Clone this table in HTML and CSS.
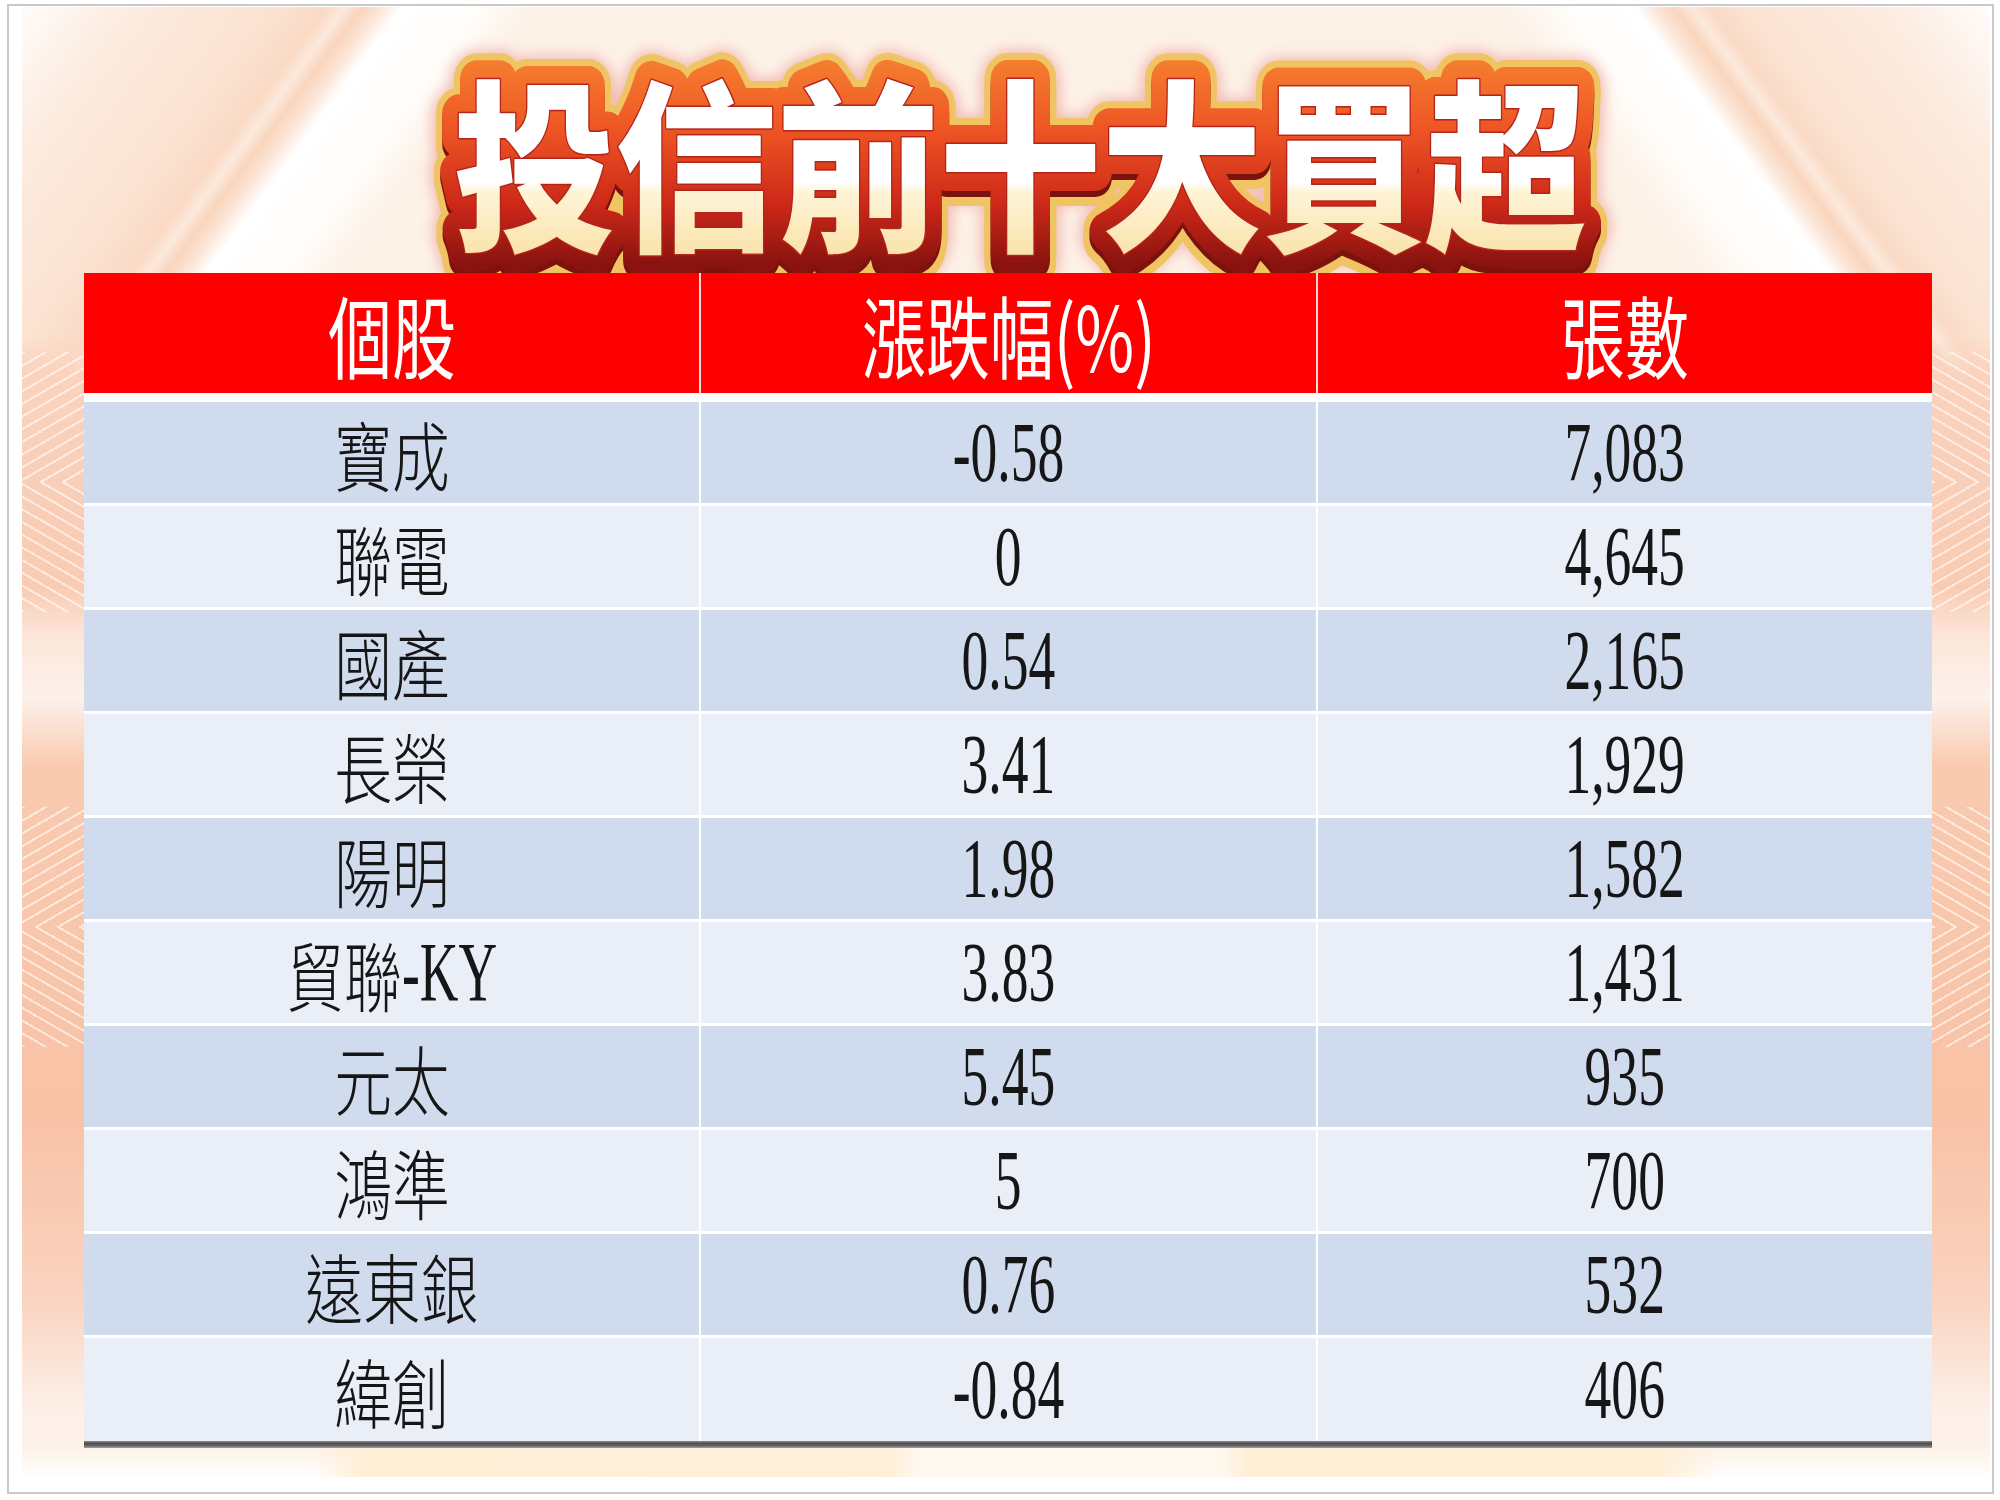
FILE: index.html
```html
<!DOCTYPE html>
<html lang="zh-Hant">
<head>
<meta charset="utf-8">
<title>投信前十大買超</title>
<link rel="stylesheet" href="styles.css">
</head>
<body>
<div class="frame">
  <div class="canvas">
    <div class="title">
      <svg class="ttl" width="1968" height="266" viewBox="0 0 1968 266">
        <defs>
          <linearGradient id="gRed" gradientUnits="userSpaceOnUse" x1="0" y1="50" x2="0" y2="256">
            <stop offset="0" stop-color="#F5802F"/>
            <stop offset="0.35" stop-color="#EE5524"/>
            <stop offset="0.72" stop-color="#CC2818"/>
            <stop offset="1" stop-color="#8A130F"/>
          </linearGradient>
          <linearGradient id="gFill" gradientUnits="userSpaceOnUse" x1="0" y1="72" x2="0" y2="244">
            <stop offset="0" stop-color="#FFFFFF"/>
            <stop offset="0.6" stop-color="#FFFFFF"/>
            <stop offset="0.66" stop-color="#FFF4D6"/>
            <stop offset="1" stop-color="#FAE4AE"/>
          </linearGradient>
          <filter id="soft" x="-10%" y="-30%" width="120%" height="160%">
            <feGaussianBlur stdDeviation="7"/>
          </filter>
          <text id="tt" class="tt" x="1134" y="230">投信前十大買超</text>
        </defs>
        <g transform="scale(0.88 1)">
          <use href="#tt" class="t-glow" y="2"/>
          <use href="#tt" class="t-gold" y="8"/>
          <use href="#tt" class="t-gold"/>
          <use href="#tt" class="t-maroon" y="6"/>
          <use href="#tt" class="t-red"/>
          <use href="#tt" class="t-fill"/>
        </g>
      </svg>
    </div>

    <div class="table">
      <div class="head">
        <div class="hc"><span class="h">個股</span></div>
        <div class="hc"><span class="h">漲跌幅(%)</span></div>
        <div class="hc"><span class="h">張數</span></div>
      </div>
      <div class="rows">
        <div class="row odd"><div class="cell"><span class="c">寶成</span></div><div class="cell"><span class="n">-0.58</span></div><div class="cell"><span class="n">7,083</span></div></div>
        <div class="row even"><div class="cell"><span class="c">聯電</span></div><div class="cell"><span class="n">0</span></div><div class="cell"><span class="n">4,645</span></div></div>
        <div class="row odd"><div class="cell"><span class="c">國產</span></div><div class="cell"><span class="n">0.54</span></div><div class="cell"><span class="n">2,165</span></div></div>
        <div class="row even"><div class="cell"><span class="c">長榮</span></div><div class="cell"><span class="n">3.41</span></div><div class="cell"><span class="n">1,929</span></div></div>
        <div class="row odd"><div class="cell"><span class="c">陽明</span></div><div class="cell"><span class="n">1.98</span></div><div class="cell"><span class="n">1,582</span></div></div>
        <div class="row even"><div class="cell mix"><span class="c">貿聯</span><span class="n">-KY</span></div><div class="cell"><span class="n">3.83</span></div><div class="cell"><span class="n">1,431</span></div></div>
        <div class="row odd"><div class="cell"><span class="c">元太</span></div><div class="cell"><span class="n">5.45</span></div><div class="cell"><span class="n">935</span></div></div>
        <div class="row even"><div class="cell"><span class="c">鴻準</span></div><div class="cell"><span class="n">5</span></div><div class="cell"><span class="n">700</span></div></div>
        <div class="row odd"><div class="cell"><span class="c">遠東銀</span></div><div class="cell"><span class="n">0.76</span></div><div class="cell"><span class="n">532</span></div></div>
        <div class="row even"><div class="cell"><span class="c">緯創</span></div><div class="cell"><span class="n">-0.84</span></div><div class="cell"><span class="n">406</span></div></div>
      </div>
      <div class="bar"></div>
    </div>
  </div>
</div>
</body>
</html>
```

FILE: styles.css
```css
html, body {
  margin: 0;
  padding: 0;
  background: #ffffff;
  font-family: "Noto Sans CJK TC", "Noto Sans", sans-serif;
}

.frame {
  margin: 4px 0 0 7px;
  width: 1987px;
  height: 1490px;
  box-sizing: border-box;
  border: 2px solid #c9c9c9;
  padding: 1px 2px 15px 13px;
  background: #ffffff;
}

.canvas {
  height: 1470px;
  display: flex;
  flex-direction: column;
  background:
    /* stripes on side panels */
    repeating-linear-gradient(150deg, rgba(255,255,255,0.6) 0 2px, rgba(255,255,255,0) 2px 11px) 0 345px / 62px 130px no-repeat,
    repeating-linear-gradient(30deg, rgba(255,255,255,0.6) 0 2px, rgba(255,255,255,0) 2px 11px) 0 475px / 62px 130px no-repeat,
    repeating-linear-gradient(150deg, rgba(255,255,255,0.6) 0 2px, rgba(255,255,255,0) 2px 11px) 0 800px / 62px 120px no-repeat,
    repeating-linear-gradient(30deg, rgba(255,255,255,0.6) 0 2px, rgba(255,255,255,0) 2px 11px) 0 920px / 62px 120px no-repeat,
    repeating-linear-gradient(30deg, rgba(255,255,255,0.6) 0 2px, rgba(255,255,255,0) 2px 11px) 100% 345px / 58px 130px no-repeat,
    repeating-linear-gradient(150deg, rgba(255,255,255,0.6) 0 2px, rgba(255,255,255,0) 2px 11px) 100% 475px / 58px 130px no-repeat,
    repeating-linear-gradient(30deg, rgba(255,255,255,0.6) 0 2px, rgba(255,255,255,0) 2px 11px) 100% 800px / 58px 120px no-repeat,
    repeating-linear-gradient(150deg, rgba(255,255,255,0.6) 0 2px, rgba(255,255,255,0) 2px 11px) 100% 920px / 58px 120px no-repeat,
    /* side panels */
    linear-gradient(180deg, rgba(253,240,232,0) 0, #FAD2BD 40px, #F9CBB2 250px, #FCE6DA 300px, #FDF1EA 360px, #F9CAB0 430px, #F8C2A6 780px, #FAD3C0 960px, #FDF1EA 1080px, rgba(255,255,255,0) 1120px) 0 330px / 62px 1120px no-repeat,
    linear-gradient(180deg, rgba(253,240,232,0) 0, #FAD2BD 40px, #F9CBB2 250px, #FCE6DA 300px, #FDF1EA 360px, #F9CAB0 430px, #F8C2A6 780px, #FAD3C0 960px, #FDF1EA 1080px, rgba(255,255,255,0) 1120px) 100% 330px / 58px 1120px no-repeat,
    /* glow under table */
    linear-gradient(90deg, rgba(255,248,240,0) 290px, #FFEFD7 340px, #FFF0DA 870px, #FFF8EF 895px, #FFF8EF 1200px, #FFEFD7 1225px, #FFEFD7 1640px, rgba(255,248,240,0) 1700px) 0 100% / 100% 30px no-repeat,
    linear-gradient(180deg, rgba(255,255,255,0) 0, #FFFFFF 100%) 0 100% / 100% 30px no-repeat,
    /* rays left */
    linear-gradient(126.5deg, #FFFCFA 0, #FCEBDF 90px, #FBE3D2 200px, #FADAC5 246px, #FCE9DC 260px, #F9D5BD 274px, #FCE6D8 290px, #FFFFFF 306px, #FFFDFA 368px, #FDF2E8 410px, #FDF2E8 100%) 0 0 / 820px 420px no-repeat,
    /* rays right */
    linear-gradient(233.5deg, #FFFCFA 0, #FCEBDF 90px, #FBE3D2 200px, #FADAC5 226px, #FCE9DC 240px, #F9D5BD 254px, #FCE6D8 270px, #FFFFFF 286px, #FFFDFA 340px, #FDF2E8 390px, #FDF2E8 100%) 100% 0 / 820px 420px no-repeat,
    #FDF2E8;
}

.title {
  flex: none;
  height: 266px;
}

.ttl {
  display: block;
  overflow: visible;
}

.tt {
  font-family: "Noto Sans CJK TC", "Noto Sans CJK SC", sans-serif;
  font-size: 184px;
  font-weight: 900;
  text-anchor: middle;
}

.ttl use {
  stroke-linejoin: round;
  stroke-linecap: round;
}

.t-glow {
  fill: #E7908A;
  stroke: #E7908A;
  stroke-width: 62px;
  opacity: 0.55;
  filter: url(#soft);
}

.t-gold {
  fill: #F0C463;
  stroke: #F0C463;
  stroke-width: 52px;
}

.t-maroon {
  fill: #7C120D;
  stroke: #7C120D;
  stroke-width: 38px;
}

.t-red {
  fill: url(#gRed);
  stroke: url(#gRed);
  stroke-width: 38px;
}

.t-fill {
  fill: url(#gFill);
  stroke: #B3241A;
  stroke-width: 3px;
  paint-order: stroke;
}

.table {
  margin-left: 62px;
  width: 1848px;
  background: #ffffff;
}

.head {
  display: grid;
  grid-template-columns: 615px 615px 614px;
  column-gap: 2px;
  height: 120px;
  margin-bottom: 9px;
  background: #FBDADA;
}

.hc {
  background: #FF0000;
  display: flex;
  align-items: center;
  justify-content: center;
}

.h {
  display: inline-block;
  color: #ffffff;
  font-family: "Noto Sans CJK TC", sans-serif;
  font-size: 90px;
  font-weight: 400;
  line-height: 1;
  transform: scaleX(0.71);
  white-space: nowrap;
}

.rows {
  display: flex;
  flex-direction: column;
  gap: 3px;
}

.row {
  display: grid;
  grid-template-columns: 615px 615px 614px;
  column-gap: 2px;
  height: 101px;
}

.row:last-child {
  height: 103px;
}

.cell {
  display: flex;
  align-items: center;
  justify-content: center;
  color: #161616;
  white-space: nowrap;
}

.odd .cell {
  background: #D0DCEE;
}

.even .cell {
  background: #E9EEF7;
}

.c {
  display: inline-block;
  font-family: "Noto Sans CJK TC", sans-serif;
  font-size: 76px;
  font-weight: 300;
  line-height: 1;
  transform: scaleX(0.76);
}

.n {
  display: inline-block;
  font-family: "Liberation Serif", "Times New Roman", serif;
  font-size: 85px;
  line-height: 1;
  transform: scaleX(0.63);
}

.mix .c {
  margin: 0 -0.24em;
}

.mix .n {
  margin: 0 -0.33em;
}

.bar {
  height: 7px;
  background: linear-gradient(180deg, #8c8c8c 0, #4f4f4f 35%, #666666 70%, #a5a5a5 100%);
}
```
